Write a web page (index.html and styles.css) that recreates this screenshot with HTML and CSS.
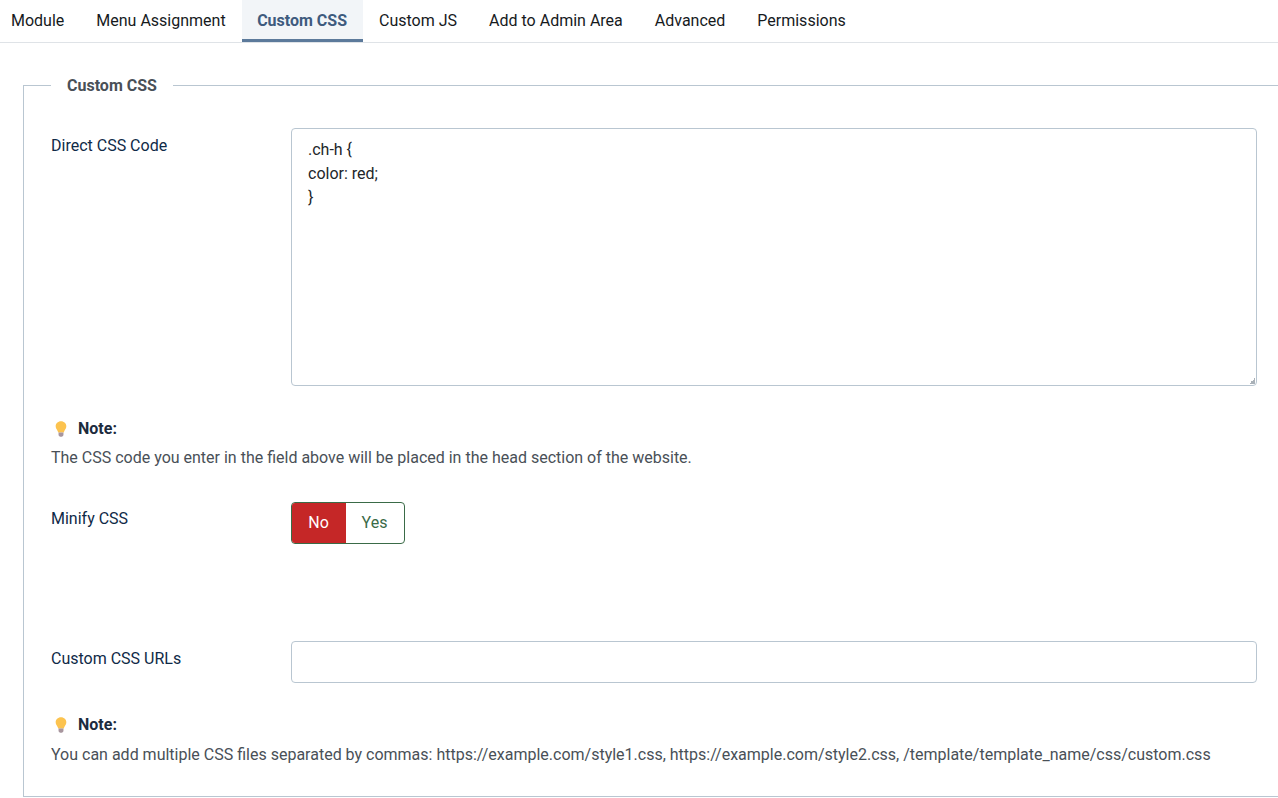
FILE: index.html
```html
<!DOCTYPE html>
<html lang="en">
<head>
<meta charset="utf-8">
<title>Custom CSS</title>
<link rel="stylesheet" href="styles.css">
</head>
<body>
<nav class="tabs">
  <a class="tab">Module</a>
  <a class="tab">Menu Assignment</a>
  <a class="tab active">Custom CSS</a>
  <a class="tab">Custom JS</a>
  <a class="tab">Add to Admin Area</a>
  <a class="tab">Advanced</a>
  <a class="tab">Permissions</a>
</nav>
<main class="content">
  <fieldset class="group">
    <legend class="group-title">Custom CSS</legend>
    <div class="row row-code">
      <label class="label">Direct CSS Code</label>
      <textarea class="control code" spellcheck="false">.ch-h {
color: red;
}</textarea>
    </div>
    <div class="note note-first">
      <div class="note-head">
        <svg class="bulb" viewBox="1 0.5 10 15" aria-hidden="true"><path d="M6 .8C3 .8 1 3 1 5.500c0 2.300 1.700 3.400 2.400 5.700h5.200C9.300 8.900 11 7.800 11 5.500 11 3 9 .8 6 .8z" fill="#fcc34f"/><path d="M3.700 11.200h4.600v2.300c0 .9-.8 1.700-1.700 1.700H5.400c-.9 0-1.700-.8-1.700-1.700z" fill="#a8969e"/></svg>
        <strong class="note-title">Note:</strong>
      </div>
      <p class="note-text">The CSS code you enter in the field above will be placed in the head section of the website.</p>
    </div>
    <div class="row row-toggle">
      <label class="label">Minify CSS</label>
      <div class="toggle">
        <span class="toggle-no">No</span>
        <span class="toggle-yes">Yes</span>
      </div>
    </div>
    <div class="row row-urls">
      <label class="label">Custom CSS URLs</label>
      <input class="control url" type="text">
    </div>
    <div class="note note-second">
      <div class="note-head">
        <svg class="bulb" viewBox="1 0.5 10 15" aria-hidden="true"><path d="M6 .8C3 .8 1 3 1 5.500c0 2.300 1.700 3.400 2.400 5.700h5.200C9.300 8.900 11 7.800 11 5.500 11 3 9 .8 6 .8z" fill="#fcc34f"/><path d="M3.700 11.200h4.600v2.300c0 .9-.8 1.700-1.700 1.700H5.400c-.9 0-1.700-.8-1.700-1.700z" fill="#a8969e"/></svg>
        <strong class="note-title">Note:</strong>
      </div>
      <p class="note-text">You can add multiple CSS files separated by commas: https://example.com/style1.css, https://example.com/style2.css, /template/template_name/css/custom.css</p>
    </div>
  </fieldset>
</main>
</body>
</html>
```
FILE: styles.css
```css
* { box-sizing: border-box; }
html, body {
  margin: 0;
  height: 798px;
  overflow: hidden;
  background: #fff;
  font-family: Roboto, "Liberation Sans", sans-serif;
  font-size: 16px;
  line-height: 24px;
  color: #22262a;
}
.tabs {
  display: flex;
  height: 43px;
  border-bottom: 1px solid #dfe3e7;
}
.tab {
  height: 42px;
  padding: 9px 16px 0;
  color: #161a1d;
  white-space: nowrap;
}
.tab:first-child { padding-left: 11px; }
.active {
  width: 121.400px;
  padding-left: 15.500px;
  padding-right: 15px;
  color: #3e5b7e;
  font-weight: 700;
  background: #f2f5f8;
  border-bottom: 3px solid #5c7a9b;
}
.content {
  padding: 29px 0 0 23px;
  width: 1300px;
}
.group {
  margin: 0;
  width: 1262px;
  min-width: 0;
  height: 725px;
  padding: 0 27px;
  border: 1px solid #b9c6d1;
}
.group-title {
  padding: 2px 16px 0;
  font-weight: 700;
  color: #495057;
}
.row { display: flex; align-items: flex-start; }
.label {
  width: 240px;
  flex: none;
  color: #0f2a47;
}
.control {
  display: block;
  width: 966px;
  flex: none;
  margin: 0;
  border: 1px solid #b9c6d1;
  border-radius: 4px;
  padding: 8px 16px;
  font: inherit;
  color: #22262a;
  background-color: #fff;
  outline: none;
}
.code {
  height: 258px;
  padding-top: 9px;
  resize: none;
  line-height: 24px;
  background-image: linear-gradient(135deg, transparent 50%, #a9b1b8 50%);
  background-size: 6px 6px;
  background-position: right 1px bottom 1px;
  background-repeat: no-repeat;
  overflow: hidden;
}
.url { height: 42px; }
.row-code { margin-top: 30px; }
.row-code .label { padding-top: 6px; }
.note-first { margin-top: 30px; }
.note-head { display: flex; align-items: center; height: 26px; }
.bulb { width: 12px; height: 16px; margin-left: 4px; flex: none; }
.note-title { margin-left: 11px; color: #1c2b3e; }
.note-text { margin: 0; padding-top: 4px; color: #495057; }
.row-toggle { margin-top: 32px; }
.row-toggle .label { padding-top: 5px; }
.toggle {
  display: flex;
  width: 114px;
  height: 42px;
  border: 1px solid #3a6b47;
  border-radius: 4px;
  overflow: hidden;
}
.toggle-no {
  width: 55px;
  margin: -1px 0 -1px -1px;
  padding-top: 9px;
  text-align: center;
  background: #c52727;
  color: #fff;
}
.toggle-yes {
  flex: 1;
  padding: 8px 1px 0 0;
  text-align: center;
  color: #3a6b47;
}
.row-urls { margin-top: 97px; }
.row-urls .label { padding-top: 6px; }
.note-second { margin-top: 29px; }
.note-second .note-text { padding-top: 5px; }
```
